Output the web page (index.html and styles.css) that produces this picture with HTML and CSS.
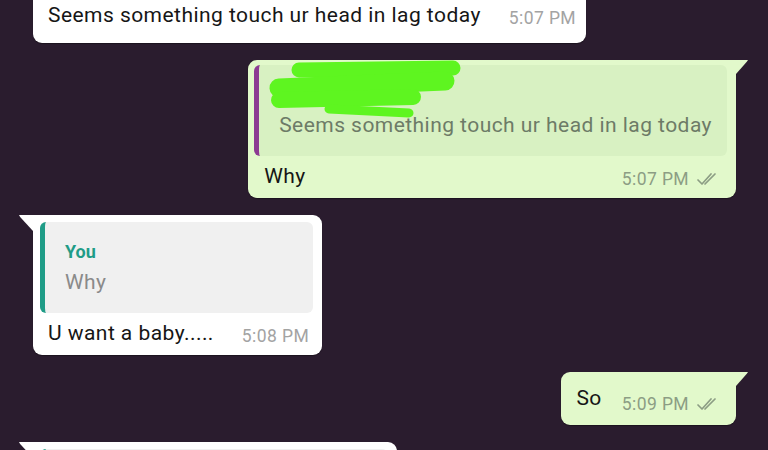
FILE: index.html
```html
<!DOCTYPE html>
<html lang="en">
<head>
<meta charset="utf-8">
<title>Chat</title>
<link rel="stylesheet" href="styles.css">
</head>
<body>
<div class="chat">
  <div class="bubble in first">
    <div class="row">
      <span class="msg">Seems something touch ur head in lag today</span>
      <span class="time">5:07 PM</span>
    </div>
  </div>

  <div class="bubble out tail">
    <div class="quote purple">
      <div class="qname">Contact</div>
      <div class="qtext">Seems something touch ur head in lag today</div>
      <svg class="scribble" viewBox="0 0 220 62" width="220" height="62" aria-hidden="true">
        <g stroke="#5ef520" stroke-linecap="round" fill="none">
          <path d="M40 10 L194 8" stroke-width="15"/>
          <path d="M20 28 L186 21" stroke-width="19"/>
          <path d="M20 40 L154 37" stroke-width="16"/>
          <path d="M70 49 L150 53" stroke-width="9"/>
        </g>
      </svg>
    </div>
    <div class="row">
      <span class="msg">Why</span>
      <span class="meta"><span class="time">5:07 PM</span><svg class="tick" viewBox="0 0 26 16" width="26" height="16"><path d="M2 9 L6 13 L15 3 M9 13 L19 3" stroke="#8c9d84" stroke-width="1.7" fill="none" stroke-linecap="round" stroke-linejoin="round"/></svg></span>
    </div>
  </div>

  <div class="bubble in tail">
    <div class="quote teal">
      <div class="qname">You</div>
      <div class="qtext">Why</div>
    </div>
    <div class="row">
      <span class="msg">U want a baby.....</span>
      <span class="time">5:08 PM</span>
    </div>
  </div>

  <div class="bubble out tail">
    <div class="row single">
      <span class="msg">So</span>
      <span class="meta"><span class="time">5:09 PM</span><svg class="tick" viewBox="0 0 26 16" width="26" height="16"><path d="M2 9 L6 13 L15 3 M9 13 L19 3" stroke="#8c9d84" stroke-width="1.7" fill="none" stroke-linecap="round" stroke-linejoin="round"/></svg></span>
    </div>
  </div>

  <div class="bubble in tail last">
    <div class="quote teal"></div>
  </div>
</div>
</body>
</html>
```

FILE: styles.css
```css
* { box-sizing: border-box; }
html, body {
  margin: 0;
  padding: 0;
  background: #2a1c2e;
  height: 450px;
  overflow: hidden;
}
body {
  font-family: Roboto, "Noto Sans", "Liberation Sans", sans-serif;
  color: #161616;
}
.chat {
  display: flex;
  flex-direction: column;
  gap: 17px;
  padding: 0 32px 0 33px;
}
.bubble {
  position: relative;
  border-radius: 9px;
  box-shadow: 0 1px 1px rgba(0,0,0,0.35);
}
.bubble.in {
  align-self: flex-start;
  background: #ffffff;
}
.bubble.out {
  align-self: flex-end;
  background: #e2f9cb;
}
.bubble.first {
  margin-top: -12px;
  border-top-left-radius: 0;
  border-top-right-radius: 0;
}
.bubble.last {
  width: 364px;
  height: 80px;
  flex-shrink: 0;
}
.bubble.in.tail { border-top-left-radius: 0; }
.bubble.out.tail { border-top-right-radius: 0; }
.bubble.in.tail::before {
  content: "";
  position: absolute;
  top: 0;
  left: -14px;
  width: 14px;
  height: 16px;
  background: #ffffff;
  clip-path: polygon(0 0, 100% 0, 100% 100%, 8% 12%);
}
.bubble.out.tail::after {
  content: "";
  position: absolute;
  top: 0;
  right: -12px;
  width: 12px;
  height: 14px;
  background: #e2f9cb;
  clip-path: polygon(0 0, 100% 0, 90% 12%, 0 100%);
}

.row {
  display: flex;
  align-items: flex-end;
  justify-content: space-between;
  gap: 28px;
  padding: 7px 13px 9px 15px;
}
.bubble.first .row {
  padding: 14px 10px 15px 15px;
}
.bubble.out .row {
  padding: 7px 16px 9px 16px;
}
.bubble.out .row.single {
  padding: 13px 16px 14px 15px;
  gap: 20px;
}
.msg {
  font-size: 21px;
  letter-spacing: 0.45px;
  line-height: 26px;
  white-space: nowrap;
}
.time {
  font-size: 17.5px;
  letter-spacing: 0.4px;
  line-height: 20px;
  color: #a3a3a3;
  white-space: nowrap;
}
.bubble.out .time { color: #8c9d84; }
.meta {
  display: flex;
  align-items: center;
  gap: 7px;
}
.tick { display: block; margin-right: -2px; }
.bubble.out .row.single .meta { margin-bottom: -3px; }

.quote {
  position: relative;
  margin: 6px 9px 0 7px;
  padding: 19px 15px 18px 20px;
  border-radius: 6px;
  border-left: 5px solid;
}
.quote.purple {
  background: #d8f1c2;
  border-left-color: #8c3b92;
  margin-top: 5px;
  margin-left: 6px;
}
.quote.teal {
  background: #f0f0f0;
  border-left-color: #1f9c87;
  margin-top: 7px;
}
.bubble.last .quote { height: 90px; }
.qname {
  font-size: 18px;
  line-height: 22px;
  font-weight: 700;
  margin-bottom: 6px;
}
.quote.teal .qname { color: #1f9c87; }
.quote.purple .qname { color: #8a6d8f; }
.qtext {
  font-size: 21px;
  letter-spacing: 0.45px;
  line-height: 26px;
  white-space: nowrap;
}
.quote.purple .qtext { color: #6d7b67; }
.quote.teal .qtext { color: #8a8a8a; }
.scribble {
  position: absolute;
  left: 0;
  top: -5px;
}
```
